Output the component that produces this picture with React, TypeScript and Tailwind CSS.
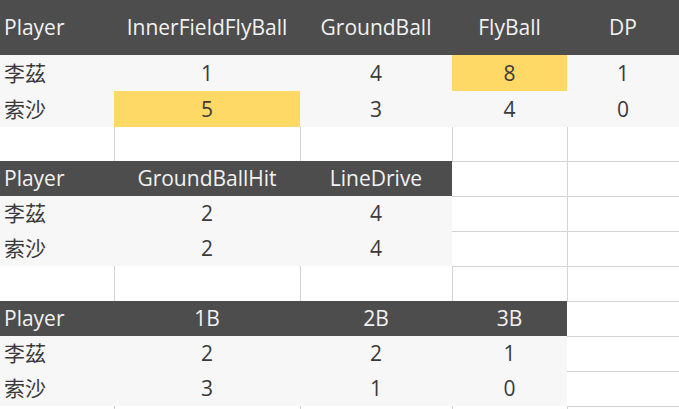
import React from "react";

type Kind = "h" | "d" | "y" | "e";
type Cell = { t: string; k: Kind };

const H = (t: string): Cell => ({ t, k: "h" });
const D = (t: string): Cell => ({ t, k: "d" });
const Y = (t: string): Cell => ({ t, k: "y" });
const E = (): Cell => ({ t: "", k: "e" });

const rows: Cell[][] = [
  [H("Player"), H("InnerFieldFlyBall"), H("GroundBall"), H("FlyBall"), H("DP")],
  [D("李茲"), D("1"), D("4"), Y("8"), D("1")],
  [D("索沙"), Y("5"), D("3"), D("4"), D("0")],
  [E(), E(), E(), E(), E()],
  [H("Player"), H("GroundBallHit"), H("LineDrive"), E(), E()],
  [D("李茲"), D("2"), D("4"), E(), E()],
  [D("索沙"), D("2"), D("4"), E(), E()],
  [E(), E(), E(), E(), E()],
  [H("Player"), H("1B"), H("2B"), H("3B"), E()],
  [D("李茲"), D("2"), D("2"), D("1"), E()],
  [D("索沙"), D("3"), D("1"), D("0"), E()],
  [E(), E(), E(), E(), E()],
];

export default function App() {
  return (
    <div
      className="grid w-[679px] h-[409px] overflow-hidden bg-white grid-cols-[114px_186px_152px_115px_112px] grid-rows-[55px_36px_36px_34px_35px_35px_35px_35px_35px_35px_35px_3px] text-[21px]"
      style={{ fontFamily: '"Open Sans", "Noto Sans CJK TC", sans-serif' }}
    >
      {rows.map((row, r) =>
        row.map((cell, c) => {
          const unf = cell.k === "e";
          const top = unf && r > 0 && rows[r - 1][c].k === "e";
          const left = unf && c > 0 && rows[r][c - 1].k === "e";
          const bg =
            cell.k === "h"
              ? "bg-[#4d4d4d] text-[#f2f2f2]"
              : cell.k === "y"
              ? "bg-[#ffd966] text-[#3a3a3a]"
              : cell.k === "d"
              ? "bg-[#f7f7f7] text-[#3a3a3a]"
              : "bg-white";
          const align = c === 0 ? "justify-start pl-[4px]" : "justify-center";
          return (
            <div
              key={`${r}-${c}`}
              className={[
                "flex items-center whitespace-nowrap leading-none border-[#d4d4d4]",
                bg,
                align,
                top ? "border-t" : "",
                left ? "border-l" : "",
              ].join(" ")}
            >
              {cell.t}
            </div>
          );
        })
      )}
    </div>
  );
}
